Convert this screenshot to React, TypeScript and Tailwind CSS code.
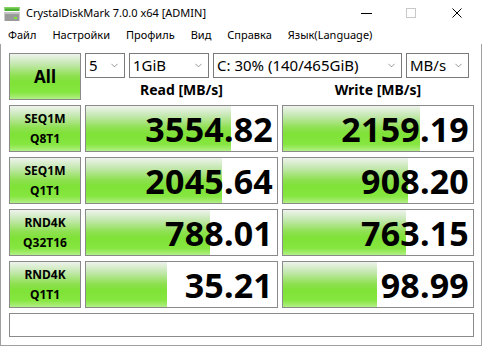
import { ChevronDown } from "lucide-react";

const rows = [
  { a: "SEQ1M", b: "Q8T1", read: "3554.82", rf: 145, write: "2159.19", wf: 137 },
  { a: "SEQ1M", b: "Q1T1", read: "2045.64", rf: 136, write: "908.20", wf: 125 },
  { a: "RND4K", b: "Q32T16", read: "788.01", rf: 124, write: "763.15", wf: 123 },
  { a: "RND4K", b: "Q1T1", read: "35.21", rf: 81, write: "98.99", wf: 94 },
];

const green =
  "bg-[linear-gradient(to_bottom,#eef3ec_0%,#c4e8b0_22%,#8fe052_48%,#7fe236_62%,#86e640_85%,#b2ef86_100%)]";

const Drop = ({ text, w }: { text: string; w: string }) => (
  <div
    className={`${w} h-[25px] border border-[#7a7a7a] bg-white flex items-center justify-between pl-[3px] pr-[4px] text-[15px] text-black`}>
    <span>{text}</span>
    <ChevronDown size={11} strokeWidth={1.3} className="text-[#555]" />
  </div>
);

const Cell = ({ value, fill }: { value: string; fill: number }) => (
  <div className="relative h-[47px] border border-[#8a8a8a] bg-white flex items-center justify-end pr-[4px]">
    <div className={`absolute left-0 top-0 bottom-0 ${green}`} style={{ width: fill }} />
    <span className="relative text-[34px] font-bold leading-none text-black tracking-[0.2px]">
      {value}
    </span>
  </div>
);

const DriveIcon = () => (
  <svg width="16" height="16" viewBox="0 0 16 16">
    <rect x="0.5" y="1" width="15" height="4" fill="#4cae33" />
    <rect x="0.5" y="1" width="15" height="1.5" fill="#7fd45c" />
    <rect x="0.5" y="6" width="15" height="9" fill="#9a9a9a" />
    <rect x="0.5" y="6" width="15" height="2" fill="#c4c4c4" />
    <rect x="10" y="11" width="3" height="2" fill="#7fe236" />
  </svg>
);

export default function App() {
  return (
    <div className="w-[483px] h-[348px] bg-white font-['Noto_Sans',sans-serif] text-black">
      <div className="h-[26px] flex items-center">
        <div className="ml-[4px] mt-[1px]">
          <DriveIcon />
        </div>
        <span className="ml-[6px] text-[11px]">CrystalDiskMark 7.0.0 x64 [ADMIN]</span>
        <div className="ml-auto flex items-center">
          <div className="w-[11px] h-[1px] bg-black mr-[34px]" />
          <div className="w-[10px] h-[10px] border border-[#c8c8c8] mr-[36px]" />
          <svg width="10" height="10" viewBox="0 0 10 10" className="mr-[21px]">
            <path d="M0.5 0.5L9.5 9.5M9.5 0.5L0.5 9.5" stroke="#000" strokeWidth="1" />
          </svg>
        </div>
      </div>
      <div className="h-[18px] flex items-center text-[11px] gap-[16px] pl-[8px]">
        <span>Файл</span>
        <span>Настройки</span>
        <span>Профиль</span>
        <span>Вид</span>
        <span>Справка</span>
        <span>Язык(Language)</span>
      </div>
      <div className="w-[482px] h-[302px] border-l border-r border-b border-[#a0a0a0] pt-[9px] pl-[8px]">
        <div className="grid grid-cols-[72px_193px_192px] gap-x-[4px] gap-y-[5px]">
          <div
            className={`h-[47px] border border-[#8a8a8a] ${green} flex items-center justify-center text-[17px] font-bold`}>
            All
          </div>
          <div className="col-span-2 flex flex-col">
            <div className="flex gap-[4px]">
              <Drop text="5" w="w-[40px]" />
              <Drop text="1GiB" w="w-[80px]" />
              <Drop text="C: 30% (140/465GiB)" w="w-[189px]" />
              <Drop text="MB/s" w="w-[63px]" />
            </div>
            <div className="grid grid-cols-[193px_192px] gap-x-[4px] h-[22px] items-center text-[14px] font-bold text-center">
              <span>Read [MB/s]</span>
              <span>Write [MB/s]</span>
            </div>
          </div>
          {rows.map((r, i) => (
            <div key={i} className="contents">
              <div
                className={`h-[47px] border border-[#8a8a8a] ${green} flex flex-col items-center justify-center text-[12px] font-bold leading-[20px]`}>
                <span>{r.a}</span>
                <span>{r.b}</span>
              </div>
              <Cell value={r.read} fill={r.rf} />
              <Cell value={r.write} fill={r.wf} />
            </div>
          ))}
          <div className="col-span-3 h-[24px] border border-[#8a8a8a] bg-white" />
        </div>
      </div>
    </div>
  );
}
